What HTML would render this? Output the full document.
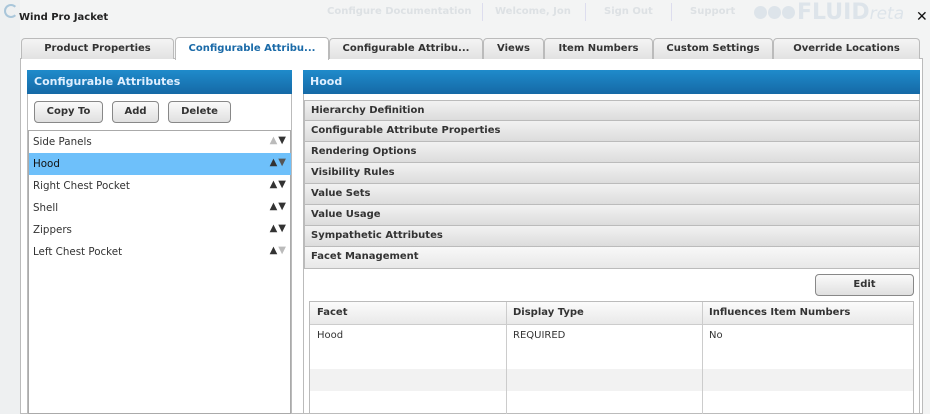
<!DOCTYPE html>
<html><head><style>
*{box-sizing:border-box;margin:0;padding:0}
body{width:930px;height:414px;overflow:hidden;background:#f3f4f4;font-family:"DejaVu Sans",Verdana,sans-serif;font-size:10px;color:#333;position:relative}
.a{position:absolute}
.b{font-weight:bold}
.tab{position:absolute;top:38px;height:21px;border:1px solid #bbb;border-bottom:none;border-radius:4px 4px 0 0;background:linear-gradient(#f4f4f4,#e2e2e2);text-align:center;line-height:19px;font-weight:bold;font-size:10px;color:#333}
.hdr{position:absolute;height:24px;background:linear-gradient(#1f8bcb,#1569a6);color:#dfefff;font-weight:bold;font-size:11px;line-height:23px;padding-left:7px}
.btn{position:absolute;top:101px;height:22px;border:1px solid #888;border-radius:4px;background:linear-gradient(#fafafa,#e0e0e0);font-weight:bold;text-align:center;line-height:20px;color:#333}
.row{position:absolute;left:29px;width:262px;height:22px;line-height:22px;padding-left:4px;color:#333;font-size:10.3px}
.arr{position:absolute;right:4px;top:-1px;font-size:10px;letter-spacing:1px;color:#333}
.acc{position:absolute;left:304px;width:616px;height:21px;border:1px solid #bbb;border-top:none;background:linear-gradient(#f2f2f2,#dcdcdc);font-weight:bold;line-height:20px;padding-left:6px;color:#333}
.th{position:absolute;top:302px;height:23px;line-height:22px;font-weight:bold;padding-left:7px;background:linear-gradient(#fbfbfb,#e9e9e9);border-bottom:1px solid #ccc}
.vl{position:absolute;top:302px;height:112px;width:1px;background:#ccc}
</style></head><body>
<div class="a" style="left:0;top:0;width:20px;height:414px;background:#eef0f1"></div>
<div class="a" style="left:4px;top:4px;width:14px;height:14px;border:2px solid #a9c6da;border-radius:50%;border-right-color:transparent"></div>
<div class="a b" style="left:19px;top:12px;font-size:10px;color:#222">Wind Pro Jacket</div>
<div class="a b" style="left:327px;top:6px;color:#dde1e4">Configure Documentation</div>
<div class="a" style="left:482px;top:3px;width:1px;height:18px;background:#dde"></div>
<div class="a b" style="left:495px;top:6px;color:#dde1e4">Welcome, Jon</div>
<div class="a" style="left:585px;top:3px;width:1px;height:18px;background:#dde"></div>
<div class="a b" style="left:604px;top:6px;color:#dde1e4">Sign Out</div>
<div class="a" style="left:671px;top:3px;width:1px;height:18px;background:#dde"></div>
<div class="a b" style="left:690px;top:6px;color:#dde1e4">Support</div>
<div class="a" style="left:754px;top:6px;width:13px;height:13px;border-radius:50%;background:#dde4ea"></div>
<div class="a" style="left:768px;top:6px;width:13px;height:13px;border-radius:50%;background:#dde4ea"></div>
<div class="a" style="left:782px;top:6px;width:13px;height:13px;border-radius:50%;background:#dde4ea"></div>
<div class="a b" style="left:797px;top:0px;font-size:22px;color:#dde4ea">FLUID<span style="font-weight:normal;font-style:italic;font-size:17px">reta</span></div>
<div class="a b" style="left:916px;top:9px;font-size:14px;color:#111">✕</div>
<div class="a" style="left:20px;top:58px;width:903px;height:356px;background:#fff;border:1px solid #bbb"></div>
<div class="tab" style="left:21px;width:153px">Product Properties</div>
<div class="tab" style="left:175px;width:154px;top:37px;height:23px;background:#fff;color:#1a6aa8;line-height:22px">Configurable Attribu...</div>
<div class="tab" style="left:329px;width:154px">Configurable Attribu...</div>
<div class="tab" style="left:483px;width:61px">Views</div>
<div class="tab" style="left:544px;width:109px">Item Numbers</div>
<div class="tab" style="left:653px;width:120px">Custom Settings</div>
<div class="tab" style="left:773px;width:147px">Override Locations</div>
<div class="a" style="left:27px;top:70px;width:265px;height:344px;border:1px solid #bbb"></div>
<div class="hdr" style="left:27px;top:70px;width:265px">Configurable Attributes</div>
<div class="btn" style="left:34px;width:69px">Copy To</div>
<div class="btn" style="left:112px;width:47px">Add</div>
<div class="btn" style="left:168px;width:63px">Delete</div>
<div class="a" style="left:28px;top:130px;width:263px;height:284px;border:1px solid #aaa;background:#fff"></div>
<div class="row" style="top:131px">Side Panels<span class="arr"><span style="color:#bbb">▲</span>▼</span></div>
<div class="row" style="top:153px;background:#6ec0fa;color:#111">Hood<span class="arr">▲<span style="color:#555">▼</span></span></div>
<div class="row" style="top:175px">Right Chest Pocket<span class="arr">▲▼</span></div>
<div class="row" style="top:197px">Shell<span class="arr">▲▼</span></div>
<div class="row" style="top:219px">Zippers<span class="arr">▲▼</span></div>
<div class="row" style="top:241px">Left Chest Pocket<span class="arr">▲<span style="color:#bbb">▼</span></span></div>
<div class="a" style="left:303px;top:70px;width:617px;height:344px;border:1px solid #bbb"></div>
<div class="hdr" style="left:303px;top:70px;width:617px">Hood</div>
<div class="acc" style="top:100px;border-top:1px solid #bbb">Hierarchy Definition</div>
<div class="acc" style="top:121px">Configurable Attribute Properties</div>
<div class="acc" style="top:142px">Rendering Options</div>
<div class="acc" style="top:163px">Visibility Rules</div>
<div class="acc" style="top:184px">Value Sets</div>
<div class="acc" style="top:205px">Value Usage</div>
<div class="acc" style="top:226px">Sympathetic Attributes</div>
<div class="acc" style="top:247px;height:22px;background:linear-gradient(#f8f8f8,#e8e8e8)">Facet Management</div>
<div class="btn" style="left:815px;top:274px;width:99px">Edit</div>
<div class="a" style="left:309px;top:301px;width:605px;height:113px;border:1px solid #bbb;background:#fff"></div>
<div class="th" style="left:310px;width:196px">Facet</div>
<div class="th" style="left:506px;width:196px">Display Type</div>
<div class="th" style="left:702px;width:211px">Influences Item Numbers</div>
<div class="a" style="left:310px;top:325px;width:603px;height:22px;line-height:21px"><span class="a" style="left:7px">Hood</span><span class="a" style="left:203px">REQUIRED</span><span class="a" style="left:399px">No</span></div>
<div class="a" style="left:310px;top:369px;width:603px;height:22px;background:#f2f2f2"></div>
<div class="vl" style="left:506px"></div>
<div class="vl" style="left:702px"></div>
</body></html>
